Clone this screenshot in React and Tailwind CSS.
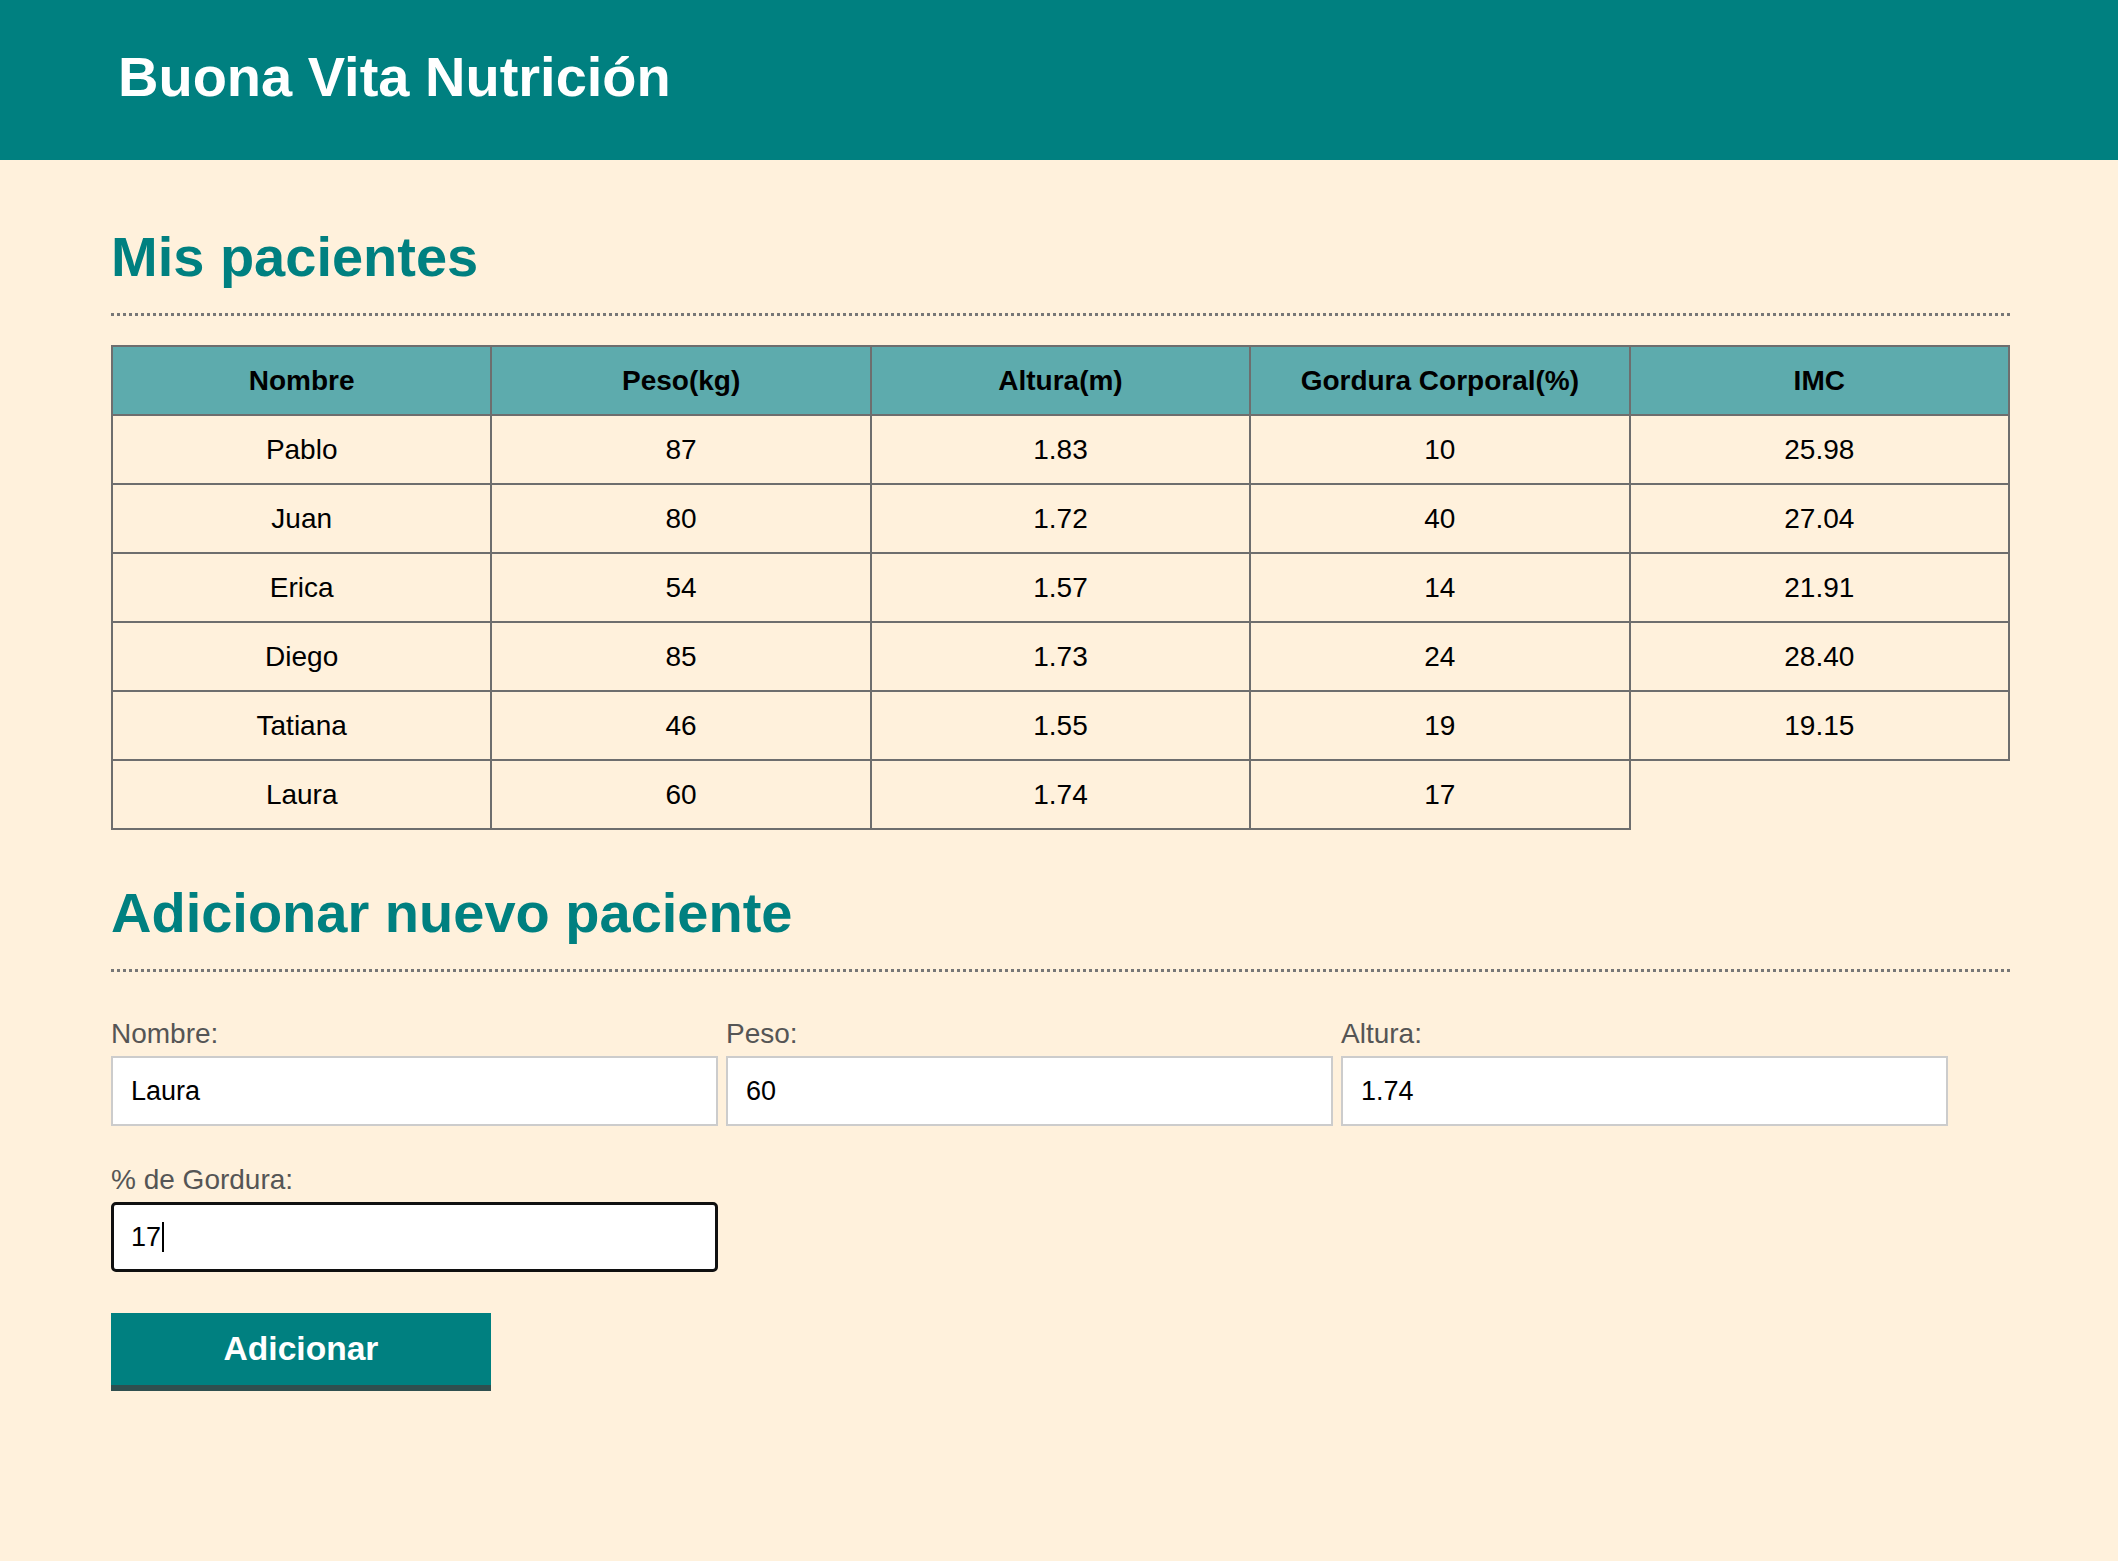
import React from "react";

const rows = [
  ["Pablo", "87", "1.83", "10", "25.98"],
  ["Juan", "80", "1.72", "40", "27.04"],
  ["Erica", "54", "1.57", "14", "21.91"],
  ["Diego", "85", "1.73", "24", "28.40"],
  ["Tatiana", "46", "1.55", "19", "19.15"],
  ["Laura", "60", "1.74", "17"],
];

const heads = ["Nombre", "Peso(kg)", "Altura(m)", "Gordura Corporal(%)", "IMC"];

function Field({ label, value, focused }) {
  return (
    <div className="w-[607px] flex flex-col">
      <label className="text-[28px] leading-[32px] text-[#555555]">{label}</label>
      <div className="relative mt-[6px]">
        <input
          readOnly
          value={value}
          className={
            focused
              ? "w-full h-[70px] bg-white border-[3px] border-[#101010] rounded-[5px] pl-[17px] text-[27px] text-black outline-none font-['Liberation_Sans',Arial,sans-serif]"
              : "w-full h-[70px] bg-white border-2 border-[#cccccc] pl-[18px] text-[27px] text-black outline-none font-['Liberation_Sans',Arial,sans-serif]"
          }
        />
        {focused && (
          <span className="absolute left-[51px] top-[20px] w-[2px] h-[30px] bg-black" />
        )}
      </div>
    </div>
  );
}

export default function App() {
  return (
    <div className="min-h-[1561px] bg-[#fff1dc] font-['Liberation_Sans',Arial,sans-serif]">
      <header className="h-[160px] bg-[#008080] pt-[45px]">
        <h1 className="ml-[118px] text-[56px] leading-[64px] font-bold text-white">
          Buona Vita Nutrición
        </h1>
      </header>

      <main className="ml-[111px] w-[1899px] pt-[65px] pb-[100px]">
        <section>
          <h2 className="text-[56px] leading-[64px] font-bold text-[#008080] pb-[24px] border-b-[3px] border-dotted border-[#777777]">
            Mis pacientes
          </h2>
          <table className="mt-[29px] w-full table-fixed border-collapse text-[28px] text-black">
            <thead>
              <tr>
                {heads.map((h) => (
                  <th
                    key={h}
                    className="bg-[#5dabad] border-2 border-[#6e6e6e] py-[17px] leading-[33px] font-bold text-center"
                  >
                    {h}
                  </th>
                ))}
              </tr>
            </thead>
            <tbody>
              {rows.map((r) => (
                <tr key={r[0]}>
                  {r.map((c, i) => (
                    <td
                      key={i}
                      className="border-2 border-[#6e6e6e] py-[17px] leading-[33px] text-center"
                    >
                      {c}
                    </td>
                  ))}
                </tr>
              ))}
            </tbody>
          </table>
        </section>

        <section className="mt-[51px]">
          <h2 className="text-[56px] leading-[64px] font-bold text-[#008080] pb-[24px] border-b-[3px] border-dotted border-[#777777]">
            Adicionar nuevo paciente
          </h2>
          <form className="mt-[46px]">
            <div className="flex flex-wrap gap-x-[8px] gap-y-[38px]">
              <Field label="Nombre:" value="Laura" />
              <Field label="Peso:" value="60" />
              <Field label="Altura:" value="1.74" />
              <Field label="% de Gordura:" value="17" focused />
            </div>
            <button
              type="button"
              className="mt-[41px] w-[380px] h-[78px] bg-[#008080] border-b-[6px] border-[#2f4f4f] text-white font-bold text-[33.6px] leading-[40px]"
            >
              Adicionar
            </button>
          </form>
        </section>
      </main>
    </div>
  );
}
